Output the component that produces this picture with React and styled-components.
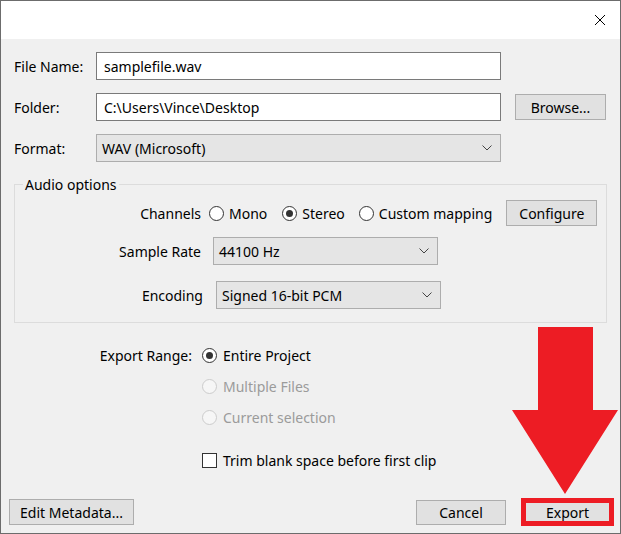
import styled, { createGlobalStyle } from 'styled-components'

const GlobalStyle = createGlobalStyle`
  html, body {
    margin: 0;
    padding: 0;
    background: #2d2d3c;
  }
  body {
    font-family: "Noto Sans", "Open Sans", "DejaVu Sans", sans-serif;
    font-size: 14px;
    color: #000;
  }
`

const Window = styled.div`
  position: relative;
  width: 621px;
  height: 534px;
  box-sizing: border-box;
  border: 1px solid #6c6c6c;
  background: #f0f0f0;
  display: flex;
  flex-direction: column;
  overflow: hidden;
`

const TitleBar = styled.div`
  height: 38px;
  background: #fff;
  display: flex;
  align-items: center;
  justify-content: flex-end;
  padding-right: 14px;
`

const Body = styled.div`
  padding: 13px 12px 0 13px;
  display: flex;
  flex-direction: column;
`

const FieldGrid = styled.div`
  display: grid;
  grid-template-columns: 82px 405px 91px;
  row-gap: 13px;
  align-items: center;
  & > :nth-child(3n) {
    margin-left: 14px;
  }
`

const Label = styled.span`
  white-space: nowrap;
`

const TextInput = styled.input`
  box-sizing: border-box;
  height: 28px;
  width: 100%;
  border: 1px solid #7a7a7a;
  background: #fff;
  padding: 0 7px;
  font: inherit;
  color: #000;
  outline: none;
`

const SelectBox = styled.div`
  box-sizing: border-box;
  height: 28px;
  width: ${p => p.$width}px;
  border: 1px solid #adadad;
  background: #e5e5e5;
  display: flex;
  align-items: center;
  justify-content: space-between;
  padding: 0 8px 0 5px;
`

const Button = styled.div`
  box-sizing: border-box;
  height: ${p => p.$height || 26}px;
  width: ${p => p.$width}px;
  border: 1px solid #adadad;
  background: #e1e1e1;
  display: flex;
  align-items: center;
  justify-content: center;
  white-space: nowrap;
`

const Highlighted = styled(Button)`
  outline: 5px solid #ed1c24;
  outline-offset: -4px;
`

const Group = styled.fieldset`
  margin: 13px 0 0 0;
  width: 593px;
  box-sizing: border-box;
  border: 1px solid #dcdcdc;
  padding: 0;
  min-width: 0;
`

const Legend = styled.legend`
  margin-left: 8px;
  padding: 0 2px;
  line-height: 19px;
`

const GroupBody = styled.div`
  display: flex;
  flex-direction: column;
  padding: 6px 0 13px 0;
`

const Row = styled.div`
  display: flex;
  align-items: center;
  margin-top: ${p => p.$top || 0}px;
`

const RowLabel = styled.span`
  width: ${p => p.$width}px;
  text-align: right;
  margin-right: ${p => p.$gap}px;
  white-space: nowrap;
`

const Choice = styled.label`
  display: flex;
  align-items: center;
  height: 20px;
  gap: ${p => p.$inner || 5}px;
  margin-right: ${p => p.$gap || 0}px;
  margin-top: ${p => p.$top || 0}px;
  white-space: nowrap;
  color: ${p => (p.$disabled ? '#9b9b9b' : '#000')};
`

const Radio = styled.span`
  box-sizing: border-box;
  width: 15px;
  height: 15px;
  border-radius: 50%;
  border: 1px solid ${p => (p.$disabled ? '#cccccc' : '#333')};
  background: ${p => (p.$disabled ? '#f6f6f6' : '#fff')};
  display: flex;
  align-items: center;
  justify-content: center;
  &::after {
    content: '';
    width: 7px;
    height: 7px;
    border-radius: 50%;
    background: #333;
    display: ${p => (p.$checked ? 'block' : 'none')};
  }
`

const Checkbox = styled.span`
  box-sizing: border-box;
  width: 15px;
  height: 15px;
  border: 1px solid #333;
  background: #fff;
`

const RangeGrid = styled.div`
  display: grid;
  grid-template-columns: 178px auto;
  column-gap: 10px;
  row-gap: 11px;
  align-items: center;
  margin-top: 22px;
  & > :first-child {
    text-align: right;
  }
`

const Footer = styled.div`
  margin-top: auto;
  display: flex;
  align-items: center;
  gap: 16px;
  padding: 0 7px 8px 8px;
  & > :first-child {
    margin-right: auto;
  }
`

const Arrow = styled.svg`
  position: absolute;
  left: 511px;
  top: 326px;
`

const Chevron = () => (
  <svg width="10" height="6" viewBox="0 0 10 6">
    <path d="M0.5 0.5 L5 5 L9.5 0.5" fill="none" stroke="#444" strokeWidth="1" />
  </svg>
)

const Select = ({ children, width }) => (
  <SelectBox $width={width}>
    <span>{children}</span>
    <Chevron />
  </SelectBox>
)

export default function App() {
  return (
    <>
      <GlobalStyle />
      <Window>
        <TitleBar>
          <svg width="12" height="12" viewBox="0 0 12 12">
            <path d="M1 1 L11 11 M11 1 L1 11" stroke="#000" strokeWidth="1" />
          </svg>
        </TitleBar>

        <Body>
          <FieldGrid>
            <Label>File Name:</Label>
            <TextInput readOnly defaultValue="samplefile.wav" />
            <span />
            <Label>Folder:</Label>
            <TextInput readOnly defaultValue="C:\Users\Vince\Desktop" />
            <Button $width={91}>Browse...</Button>
            <Label>Format:</Label>
            <Select width={405}>WAV (Microsoft)</Select>
            <span />
          </FieldGrid>

          <Group>
            <Legend>Audio options</Legend>
            <GroupBody>
              <Row>
                <RowLabel $width={186} $gap={8}>Channels</RowLabel>
                <Choice $gap={15}><Radio />Mono</Choice>
                <Choice $gap={14}><Radio $checked />Stereo</Choice>
                <Choice $gap={14}><Radio />Custom mapping</Choice>
                <Button $width={91}>Configure</Button>
              </Row>
              <Row $top={11}>
                <RowLabel $width={186} $gap={12}>Sample Rate</RowLabel>
                <Select width={225}>44100 Hz</Select>
              </Row>
              <Row $top={16}>
                <RowLabel $width={188} $gap={13}>Encoding</RowLabel>
                <Select width={225}>Signed 16-bit PCM</Select>
              </Row>
            </GroupBody>
          </Group>

          <RangeGrid>
            <Label>Export Range:</Label>
            <Choice $inner={6}><Radio $checked />Entire Project</Choice>
            <span />
            <Choice $inner={6} $disabled><Radio $disabled />Multiple Files</Choice>
            <span />
            <Choice $inner={6} $disabled><Radio $disabled />Current selection</Choice>
            <span />
            <Choice $inner={6} $top={12}><Checkbox />Trim blank space before first clip</Choice>
          </RangeGrid>
        </Body>

        <Footer>
          <Button $width={125}>Edit Metadata...</Button>
          <Button $width={90} $height={25}>Cancel</Button>
          <Highlighted $width={91}>Export</Highlighted>
        </Footer>

        <Arrow width="106" height="168" viewBox="0 0 106 168">
          <polygon points="26,0 81,0 81,83 106,83 53,167 0,83 26,83" fill="#ed1c24" />
        </Arrow>
      </Window>
    </>
  )
}
